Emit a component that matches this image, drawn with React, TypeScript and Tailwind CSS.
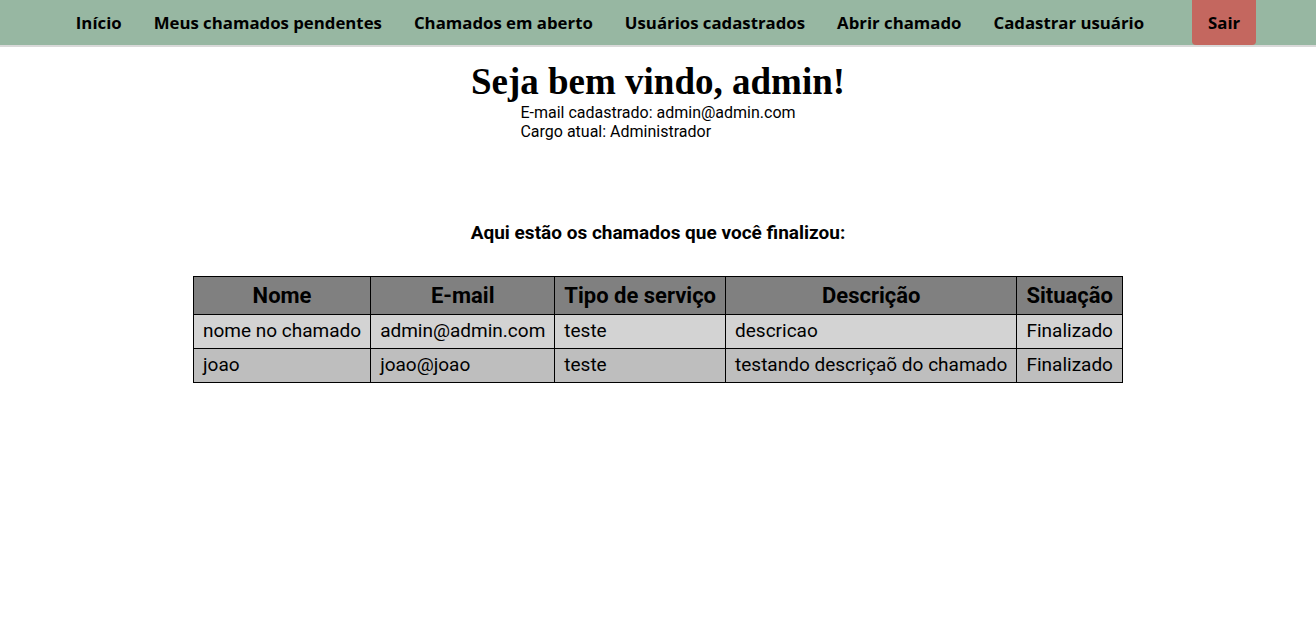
const links = [
    'Início',
    'Meus chamados pendentes',
    'Chamados em aberto',
    'Usuários cadastrados',
    'Abrir chamado',
    'Cadastrar usuário',
];

const chamados = [
    { nome: 'nome no chamado', email: 'admin@admin.com', tipo: 'teste', descricao: 'descricao', situacao: 'Finalizado' },
    { nome: 'joao', email: 'joao@joao', tipo: 'teste', descricao: 'testando descriçaõ do chamado', situacao: 'Finalizado' },
];

const App = () => {
    return (
        <div className="min-h-screen bg-white text-black font-['Roboto',sans-serif]">
            {/* Navbar */}
            <nav className="h-[47px] bg-[#97b7a2] border-b-2 border-[#d9d9d9] flex justify-center items-start font-['Open_Sans','DejaVu_Sans',sans-serif] font-bold text-[16.8px]">
                {links.map(link => (
                    <a key={link} href="#" className="px-4 h-[45px] flex items-center">
                        {link}
                    </a>
                ))}
                <a href="#" className="ml-8 px-4 h-[45px] flex items-center bg-[#c4675f] rounded-b">
                    Sair
                </a>
            </nav>

            {/* Boas-vindas */}
            <div className="flex flex-col items-center pt-[14px]">
                <h1 className="font-['Liberation_Serif',serif] font-bold text-[37px] leading-[42px]">Seja bem vindo, admin!</h1>
                <div className="text-left text-base leading-[19px]">
                    <p>E-mail cadastrado: admin@admin.com</p>
                    <p>Cargo atual: Administrador</p>
                </div>
            </div>

            <h2 className="text-center font-bold text-[19px] leading-[28px] mt-[78px]">Aqui estão os chamados que você finalizou:</h2>

            <div className="flex justify-center mt-[29px]">
                <table className="border-collapse text-[19px]">
                    <thead>
                        <tr className="bg-[#808080]">
                            <th className="border border-black px-[9px] h-[38px] text-[22px]">Nome</th>
                            <th className="border border-black px-[9px] h-[38px] text-[22px]">E-mail</th>
                            <th className="border border-black px-[9px] h-[38px] text-[22px]">Tipo de serviço</th>
                            <th className="border border-black px-[9px] h-[38px] text-[22px]">Descrição</th>
                            <th className="border border-black px-[9px] h-[38px] text-[22px]">Situação</th>
                        </tr>
                    </thead>
                    <tbody>
                        {chamados.map((c, i) => (
                            <tr key={i} className={i % 2 === 0 ? 'bg-[#d3d3d3]' : 'bg-[#bebebe]'}>
                                <td className="border border-black px-[9px] h-[34px]">{c.nome}</td>
                                <td className="border border-black px-[9px] h-[34px]">{c.email}</td>
                                <td className="border border-black px-[9px] h-[34px]">{c.tipo}</td>
                                <td className="border border-black px-[9px] h-[34px]">{c.descricao}</td>
                                <td className="border border-black px-[9px] h-[34px]">{c.situacao}</td>
                            </tr>
                        ))}
                    </tbody>
                </table>
            </div>
        </div>
    );
};

export default App;
